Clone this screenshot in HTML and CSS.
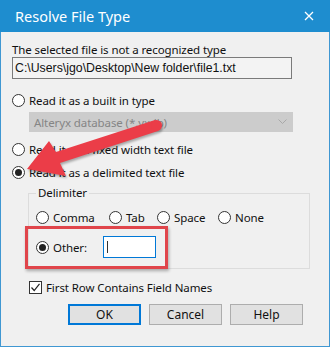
FILE: index.html
```html
<!DOCTYPE html>
<html lang="en">
<head>
    <meta charset="UTF-8">
    <title>Resolve File Type</title>
    <link rel="stylesheet" href="styles.css">
</head>
<body>
    <div class="window">
        <div class="titlebar">
            <span class="title">Resolve File Type</span>
            <svg class="close" width="10" height="10" viewBox="0 0 10 10">
                <path d="M1 1 L9 9 M9 1 L1 9" stroke="#fff" stroke-width="1.3" fill="none"/>
            </svg>
        </div>

        <div class="content">
            <div class="caption">The selected file is not a recognized type</div>
            <div class="path">C:\Users\jgo\Desktop\New folder\file1.txt</div>

            <div class="option first"><span class="radio"></span>Read it as a built in type</div>
            <div class="combo">
                <span>Alteryx database (*.yxdb)</span>
                <svg width="9" height="6" viewBox="0 0 9 6">
                    <path d="M0.5 0.5 L4.5 4.5 L8.5 0.5" stroke="#a8a8a8" stroke-width="1" fill="none"/>
                </svg>
            </div>
            <div class="option second"><span class="radio"></span>Read it as a fixed width text file</div>
            <div class="option third"><span class="radio on"></span>Read it as a delimited text file</div>

            <fieldset class="group">
                <legend>Delimiter</legend>
                <div class="delims">
                    <div class="option"><span class="radio"></span>Comma</div>
                    <div class="option"><span class="radio"></span>Tab</div>
                    <div class="option"><span class="radio"></span>Space</div>
                    <div class="option"><span class="radio"></span>None</div>
                </div>
                <div class="other">
                    <div class="option"><span class="radio on"></span>Other:</div>
                    <div class="other-input"><span class="caret"></span></div>
                </div>
            </fieldset>

            <div class="check-row">
                <span class="checkbox">
                    <svg width="11" height="11" viewBox="0 0 11 11">
                        <path d="M1.5 5.5 L4.2 8.5 L9.5 1.8" stroke="#222" stroke-width="1.2" fill="none"/>
                    </svg>
                </span>
                First Row Contains Field Names
            </div>

            <div class="buttons">
                <button class="default">OK</button>
                <button>Cancel</button>
                <button>Help</button>
            </div>
        </div>

        <!-- annotation drawn over the dialog -->
        <div class="highlight"></div>
        <svg class="arrow" width="330" height="347" viewBox="0 0 330 347">
            <polygon points="155,120 158,131 60,163 66,176 27,169 49,141 56,152" fill="#eb3d48"/>
            <circle cx="156.5" cy="125.5" r="5.5" fill="#eb3d48"/>
        </svg>
    </div>
</body>
</html>
```

FILE: styles.css
```css
body {
    margin: 0;
    font-family: "Noto Sans", "Open Sans", sans-serif;
    font-size: 11.5px;
    letter-spacing: -0.1px;
    color: #111;
}

.window {
    position: relative;
    width: 330px;
    height: 347px;
    box-sizing: border-box;
    background-color: #f0f0f0;
    border: 1px solid #3f97d2;
    border-top: none;
}

.titlebar {
    height: 32px;
    margin: 0 -1px;
    background-color: #1e8dcf;
    display: flex;
    align-items: center;
    justify-content: space-between;
    padding: 0 16px 0 15px;
}

.title {
    color: #fff;
    font-size: 14.5px;
    letter-spacing: 0;
}

.content {
    padding: 10px 0 0 11px;
}

.caption {
    line-height: 15px;
}

.path {
    width: 280px;
    height: 22px;
    box-sizing: border-box;
    border: 1px solid #7a7a7a;
    background-color: #f3f3f3;
    font-family: "Liberation Sans", Arial, sans-serif;
    font-size: 12.3px;
    letter-spacing: 0;
    line-height: 20px;
    padding-left: 2px;
}

.option {
    display: flex;
    align-items: center;
    height: 16px;
    white-space: nowrap;
}

.option.first {
    margin-top: 13px;
}

.option.second {
    margin-top: 9px;
}

.option.third {
    margin-top: 7px;
}

.radio {
    width: 13px;
    height: 13px;
    box-sizing: border-box;
    border: 1px solid #333;
    border-radius: 50%;
    background-color: #fff;
    margin-right: 4px;
    flex-shrink: 0;
    display: flex;
    align-items: center;
    justify-content: center;
}

.radio.on::after {
    content: "";
    width: 7px;
    height: 7px;
    border-radius: 50%;
    background-color: #222;
}

.combo {
    margin: 4px 0 0 17px;
    width: 264px;
    height: 20px;
    box-sizing: border-box;
    background-color: #cccccc;
    color: #858585;
    display: flex;
    align-items: center;
    justify-content: space-between;
    padding: 0 6px 0 5px;
}

.group {
    margin: 6px 0 0 16px;
    width: 282px;
    height: 83px;
    box-sizing: border-box;
    border: 1px solid #dcdcdc;
    padding: 0 6px 0 7px;
}

.group legend {
    padding: 0 2px;
    line-height: 14px;
}

.delims {
    display: grid;
    grid-template-columns: 73px 48px 61px auto;
    margin-top: 9px;
}

.other {
    display: flex;
    align-items: center;
    margin-top: 11px;
    height: 22px;
}

.other .option {
    width: 67px;
}

.other-input {
    width: 53px;
    height: 22px;
    box-sizing: border-box;
    border: 1px solid #0078d7;
    background-color: #fff;
    display: flex;
    align-items: center;
    padding-left: 3px;
}

.caret {
    width: 1px;
    height: 12px;
    background-color: #333;
}

.check-row {
    display: flex;
    align-items: center;
    height: 16px;
    margin: 10px 0 0 17px;
}

.checkbox {
    width: 13px;
    height: 13px;
    box-sizing: border-box;
    border: 1px solid #333;
    background-color: #fff;
    margin-right: 4px;
    display: flex;
    align-items: center;
    justify-content: center;
}

.buttons {
    display: flex;
    gap: 8px;
    margin: 9px 0 0 56px;
}

button {
    width: 73px;
    height: 21px;
    box-sizing: border-box;
    background-color: #e1e1e1;
    border: 1px solid #adadad;
    font-family: "Noto Sans", "Open Sans", sans-serif;
    font-size: 12px;
    color: #111;
    padding: 0;
}

button.default {
    border: 2px solid #0078d7;
}

.highlight {
    position: absolute;
    left: 24px;
    top: 226px;
    width: 143px;
    height: 43px;
    box-sizing: border-box;
    border: 3px solid #e0454b;
    box-shadow: 1px 2px 3px rgba(0, 0, 0, 0.3);
}

.arrow {
    position: absolute;
    left: -1px;
    top: 0;
    pointer-events: none;
    filter: drop-shadow(1px 2px 1px rgba(0, 0, 0, 0.3));
}
```
